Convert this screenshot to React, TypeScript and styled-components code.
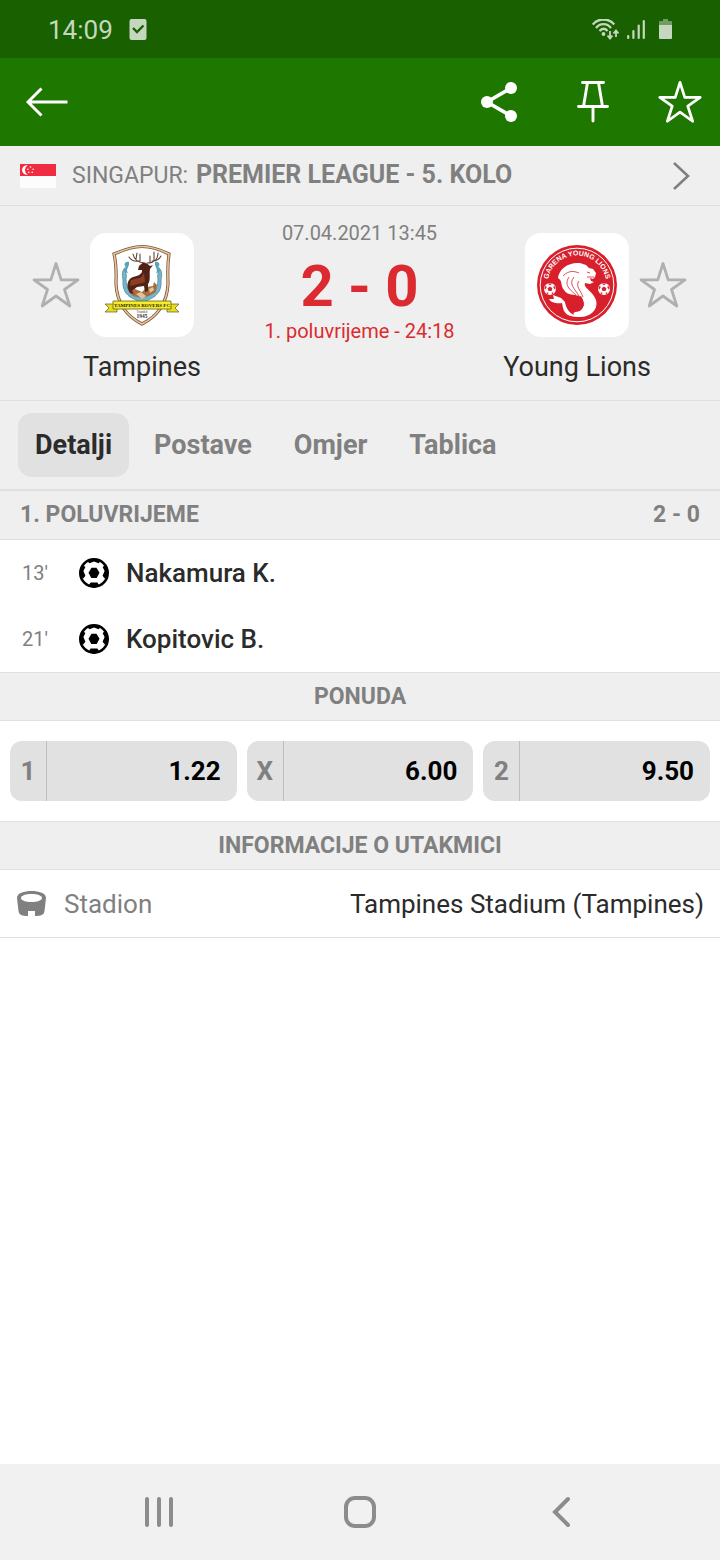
import React from "react";
import styled, { createGlobalStyle } from "styled-components";

const color = {
  status: "#186000",
  bar: "#1e7800",
  panel: "#efefef",
  chip: "#e1e1e1",
  line: "#e0e0e0",
  muted: "#808080",
  text: "#2b2b2b",
  live: "#dc2b30",
  statusIcon: "#c5d7bf",
};

const GlobalStyle = createGlobalStyle`
  *, *::before, *::after { box-sizing: border-box; }
  body { margin: 0; background: #fff; color: ${color.text}; font-family: Roboto, "Liberation Sans", sans-serif; }
  h1, h2, p, ul, dl, dd { margin: 0; padding: 0; }
  ul { list-style: none; }
  button { margin: 0; padding: 0; border: 0; background: none; color: inherit; font: inherit; cursor: pointer; }
  a { color: inherit; text-decoration: none; }
  svg { display: block; flex: none; }
`;

const Screen = styled.div`
  display: flex;
  flex-direction: column;
  min-height: 100vh;
`;

const StatusBar = styled.div`
  display: flex;
  align-items: center;
  height: 58px;
  padding: 2px 47px 0 48px;
  background: ${color.status};
  color: ${color.statusIcon};
  font-size: 26px;
`;

const StatusLeft = styled.div`
  display: flex;
  align-items: center;
  gap: 16px;
  margin-right: auto;
`;

const StatusRight = styled.div`
  display: flex;
  align-items: center;
  gap: 8px;
`;

const AppBar = styled.header`
  display: flex;
  align-items: center;
  height: 88px;
  padding: 0 16px 0 22px;
  background: ${color.bar};
  color: #fff;
`;

const AppActions = styled.div`
  display: flex;
  gap: 42px;
  margin-left: auto;
`;

const IconButton = styled.button`
  display: flex;
  align-items: center;
  justify-content: center;
  width: 48px;
  height: 48px;
`;

const LeagueLink = styled.a`
  display: flex;
  align-items: center;
  height: 60px;
  padding: 0 30px 0 20px;
  border-bottom: 1px solid ${color.line};
  background: ${color.panel};
  color: ${color.muted};
`;

const LeagueName = styled.span`
  flex: 1;
  margin-left: 16px;
  font-size: 23px;
  line-height: 32px;
  white-space: nowrap;

  b {
    margin-left: 2px;
    font-size: 25px;
    font-weight: 700;
  }
`;

const Match = styled.section`
  display: flex;
  justify-content: space-between;
  padding: 15px 33px 15px 32px;
  border-bottom: 1px solid ${color.line};
  background: ${color.panel};
`;

const Team = styled.div<{ $away?: boolean }>`
  display: grid;
  grid-template-columns: ${(p) => (p.$away ? "104px 48px" : "48px 104px")};
  grid-template-areas: ${(p) => (p.$away ? '"crest star" "name ."' : '"star crest" ". name"')};
  column-gap: 10px;
  row-gap: 12px;
  padding-top: 12px;
`;

const Favourite = styled(IconButton)`
  grid-area: star;
  align-self: center;
  color: #b0b0b0;
`;

const Crest = styled.div`
  grid-area: crest;
  display: flex;
  align-items: center;
  justify-content: center;
  height: 104px;
  border-radius: 16px;
  background: #fff;
`;

const TeamName = styled.span`
  grid-area: name;
  justify-self: center;
  font-size: 27px;
  line-height: 36px;
  white-space: nowrap;
`;

const Result = styled.div`
  display: flex;
  flex-direction: column;
  align-items: center;
  white-space: nowrap;
`;

const Kickoff = styled.time`
  margin-bottom: 11px;
  color: ${color.muted};
  font-size: 20px;
  line-height: 24px;
`;

const Score = styled.h1`
  color: ${color.live};
  font-size: 58px;
  font-weight: 700;
  line-height: 60px;
`;

const Period = styled.p`
  color: ${color.live};
  font-size: 20px;
  line-height: 30px;
`;

const Tabs = styled.nav`
  display: flex;
  gap: 8px;
  padding: 12px 18px;
  border-bottom: 2px solid ${color.line};
  background: ${color.panel};
`;

const Tab = styled.button<{ $active?: boolean }>`
  height: 64px;
  padding: 0 17px;
  border-radius: 14px;
  background: ${(p) => (p.$active ? color.chip : "transparent")};
  color: ${(p) => (p.$active ? color.text : color.muted)};
  font-size: 27px;
  font-weight: 700;
`;

const Content = styled.main`
  flex: 1;
`;

const SectionHeader = styled.h2<{ $center?: boolean; $ruled?: boolean }>`
  display: flex;
  justify-content: ${(p) => (p.$center ? "center" : "space-between")};
  padding: 0 20px;
  border-top: ${(p) => (p.$ruled ? `1px solid ${color.line}` : "0")};
  border-bottom: 1px solid ${color.line};
  background: ${color.panel};
  color: ${color.muted};
  font-size: 23px;
  font-weight: 700;
  line-height: ${(p) => (p.$ruled ? 47 : 48)}px;
`;

const Incident = styled.li`
  display: flex;
  align-items: center;
  height: 66px;
  padding: 0 22px;
  font-size: 26px;
  font-weight: 500;
`;

const Minute = styled.span`
  width: 56px;
  color: ${color.muted};
  font-size: 20px;
  font-weight: 400;
`;

const Player = styled.span`
  margin-left: 16px;
`;

const Odds = styled.div`
  display: flex;
  gap: 10px;
  padding: 20px 10px;
`;

const Odd = styled.button`
  display: flex;
  flex: 1;
  align-items: stretch;
  height: 60px;
  border-radius: 12px;
  background: ${color.chip};
  color: #000;
  font-size: 26px;
  font-weight: 700;
  line-height: 60px;
`;

const Outcome = styled.span`
  width: 37px;
  border-right: 1px solid #bdbdbd;
  color: ${color.muted};
`;

const Price = styled.span`
  flex: 1;
  padding-right: 16px;
  text-align: right;
`;

const Info = styled.dl`
  display: flex;
  align-items: center;
  justify-content: space-between;
  height: 68px;
  padding: 0 16px;
  border-bottom: 1px solid ${color.line};
  font-size: 26px;
`;

const InfoLabel = styled.dt`
  display: flex;
  align-items: center;
  gap: 17px;
  color: ${color.muted};
`;

const SystemNav = styled.nav`
  display: flex;
  align-items: center;
  justify-content: center;
  gap: 153px;
  height: 96px;
  background: #f1f1f1;
  color: #8c8c8c;
`;

const StarIcon = ({ size, stroke }: { size: number; stroke: number }) => (
  <svg width={size} height={size} viewBox="0 0 48 48" fill="none" stroke="currentColor" strokeWidth={stroke} strokeLinejoin="round">
    <path d="M24 2.500 29.200 18.900H46L32.500 28.500 37.800 45 24 35 10.200 45 15.500 28.500 2 18.900H18.800Z" />
  </svg>
);

const BallIcon = () => (
  <svg width="32" height="32" viewBox="0 0 32 32">
    <circle cx="16" cy="16" r="13.700" fill="#fff" stroke="#000" strokeWidth="2.600" />
    <path d="M13.500 10.800H18.500L21.500 15.800 18.700 21H13.300L10.500 15.800Z" />
    <path d="M9 4 16 2 23 4 20.500 6.200 16 4.600 11.500 6.200ZM1.600 14 4.600 8 7.400 10 5.400 14 7.400 18.800 5.200 21.500 2.600 20ZM30.400 14 27.400 8 24.600 10 26.600 14 24.600 18.800 26.800 21.500 29.400 20ZM12.600 25.600H19.400L21.600 29 16 31 10.400 29Z" />
  </svg>
);

const SingaporeFlag = () => (
  <svg width="36" height="24" viewBox="0 0 36 24">
    <path fill="#fcfcfc" d="M0 12H36V24H0Z" />
    <path fill="#f02c43" d="M0 0H36V12H0Z" />
    <path fill="#fff" d="M7.800 1.300A4.800 4.800 0 1 0 7.800 10.700 5.300 5.300 0 0 1 7.800 1.300Z" />
    <g fill="#fff">
      <circle cx="10.500" cy="3" r=".8" />
      <circle cx="7.800" cy="5.200" r=".8" />
      <circle cx="13.200" cy="5.200" r=".8" />
      <circle cx="8.800" cy="8.200" r=".8" />
      <circle cx="12.200" cy="8.200" r=".8" />
    </g>
  </svg>
);

const TampinesCrest = () => (
  <svg width="80" height="84" viewBox="0 0 80 84">
    <path d="M40 3.500C50 3.500 59 7 67 11C65 24 66 32 66 41 65 60 56 73 40 81 24 73 15 60 14 41 14 32 15 24 12 11 21 7 30 3.500 40 3.500Z" fill="#fff" stroke="#77583a" strokeWidth="3.200" />
    <path d="M40 3.500C50 3.500 59 7 67 11C65 24 66 32 66 41 65 60 56 73 40 81 24 73 15 60 14 41 14 32 15 24 12 11 21 7 30 3.500 40 3.500Z" fill="none" stroke="#eac49b" strokeWidth="1.600" />
    <path d="M22 26C24 30 25 32 24 36 24 46 29 53 40 54 51 53 56 46 56 36 55 32 56 30 58 26 61 30 59 35 59 38 60 49 53 54 48 56 44 58 42 60 40 62 38 60 36 58 32 56 27 54 20 49 21 38 21 35 19 30 22 26Z" fill="#76b5c9" stroke="#4b8da3" strokeWidth=".8" />
    <path d="M27 19C23 18 21 22 24 24 20 25 22 30 26 30 23 26 28 24 27 19ZM53 19C57 18 59 22 56 24 60 25 58 30 54 30 57 26 52 24 53 19Z" fill="#58a2bb" />
    <path d="M27 49 33 46 40 49 45 44 51 43 52 39 55 42 54 49 47 53 39 55 31 53Z" fill="#a66c42" />
    <path d="M34 51 39 49 44 53 40 56ZM47 46 51 44 52 47 48 50Z" fill="#dfc39a" />
    <path d="M37 23 41 19.500 45 20.500 48 23 51 22 48 26C47 31 49 37 46 41L46 48 43 49 42 43 35 44 30 48 32 51 28 50C24 44 25 38 29 35 33 33 38 33 40 29L40 27 36 27Z" fill="#522214" />
    <path d="M29 37 39 34.500 42 30 43 39 36 41 28 43Z" fill="#8b3e24" />
    <path d="M43 20C35 20 32 16 31 11M37 18C32 19 29 17 27 14M34 16 35 10M38 18 38 11M45 20C52 20 56 16 56 10M50 18C54 18 57 17 59 13M52 17 52 9M48 19 48 13" fill="none" stroke="#604336" strokeWidth="1.100" strokeLinecap="round" />
    <path d="M3 61H15V69H3L7 65ZM77 61H65V69H77L73 65Z" fill="#e8dc20" stroke="#5d5c20" strokeWidth=".7" />
    <path d="M11 58H69V66H11Z" fill="#f7ec28" stroke="#66631d" strokeWidth=".8" />
    <text x="40" y="64" textAnchor="middle" fontFamily="Liberation Serif, serif" fontSize="5" fontWeight="700" fill="#242414">TAMPINES ROVERS FC</text>
    <text x="40" y="69.500" textAnchor="middle" fontFamily="Liberation Serif, serif" fontSize="3" fill="#333">Founded</text>
    <text x="40" y="74.500" textAnchor="middle" fontFamily="Liberation Serif, serif" fontSize="5.500" fontWeight="700" fill="#333">1945</text>
  </svg>
);

const SmallBall = ({ x }: { x: number }) => (
  <g transform={`translate(${x} 44)`}>
    <circle r="6" fill="#fff" />
    <path fill="#d8202d" d="M0-2.500 2.400-.8 1.500 2H-1.500L-2.400-.8ZM-2.500-5.400 2.500-5.400 0-3.800ZM-5.600-1-4-3.800-3.400-1.500-5 .8ZM5.600-1 4-3.800 3.400-1.500 5 .8ZM-4 4-1.800 3.200-1.800 5.500ZM4 4 1.800 3.200 1.800 5.500Z" />
  </g>
);

const LionsCrest = () => (
  <svg width="80" height="80" viewBox="0 0 80 80">
    <circle cx="40" cy="40" r="40" fill="#d8202d" />
    <circle cx="40" cy="40" r="36.800" fill="none" stroke="#fff" strokeWidth="1" />
    <path id="lions-arc" d="M10.500 40A29.500 29.500 0 0 1 69.500 40" fill="none" />
    <text fontFamily="Liberation Sans, sans-serif" fontSize="7" fontWeight="700" fill="#fff" textAnchor="middle">
      <textPath href="#lions-arc" startOffset="50%">GARENA YOUNG LIONS</textPath>
    </text>
    <SmallBall x={13} />
    <SmallBall x={67} />
    <path d="M21 33C22 24 31 17 43 18L49 20 52 23 56 24 59 28 58 32 56 34 53 33 54 36 57 37 53 39 48 38C46 43 56 46 59 55 62 66 51 73 41 72 31 72 27 68 26 63L25 58C21 59 14 58 12 54L17 54 16 50 24 53 28 57C29 63 32 68 37 70 35 67 39 67 43 65 50 60 46 55 42 51 37 49 31 51 27 45 23 40 26 36 21 33Z" fill="#fff" />
    <path d="M44 51C47 56 48 60 45 64 41 69 36 66 31 63L28 57 32 52 38 53Z" fill="#d8202d" />
    <path d="M32 32C26 41 35 46 39 50M37 32C31 39 38 44 42 51M42 36C38 41 44 46 46 52M26 31C32 25 37 26 42 28M50 32 57 32M50 27 53 28" fill="none" stroke="#d8202d" strokeWidth=".8" />
  </svg>
);

const incidents = [
  { minute: "13'", player: "Nakamura K." },
  { minute: "21'", player: "Kopitovic B." },
];

const odds = [
  { outcome: "1", price: "1.22" },
  { outcome: "X", price: "6.00" },
  { outcome: "2", price: "9.50" },
];

const tabs = ["Detalji", "Postave", "Omjer", "Tablica"];

export default function App() {
  return (
    <Screen>
      <GlobalStyle />
      <StatusBar>
        <StatusLeft>
          <span>14:09</span>
          <svg width="18" height="22" viewBox="0 0 18 22">
            <rect x=".5" y="0" width="17" height="21" rx="2" fill="currentColor" />
            <path d="M4 9 8 13 14.500 6.500" fill="none" stroke={color.status} strokeWidth="2.400" />
          </svg>
        </StatusLeft>
        <StatusRight>
          <svg width="27" height="22" viewBox="0 0 27 22" fill="none" stroke="currentColor" strokeWidth="2.300">
            <path d="M.8 5.500C6-1.200 17-1.200 22.200 5.500M4 9C8 3.800 15 3.800 19 9M7.500 12C10 9 13.500 9 15.500 12" />
            <circle cx="11.500" cy="15" r="1.900" fill="currentColor" stroke="none" />
            <path d="M18 12V19.500M15.500 16.500 18 19.500 20.500 16.500M24 18V12M21.500 14.500 24 11.500 26.500 14.500" strokeWidth="1.800" />
          </svg>
          <svg width="18" height="22" viewBox="0 0 18 22" stroke="currentColor" strokeWidth="2.200" strokeLinecap="round">
            <path d="M1.200 17V19M6.400 12V19M11.700 6.500V19M16.800 2V19" />
          </svg>
          <svg width="20" height="22" viewBox="0 0 20 22" fill="currentColor">
            <path opacity=".5" d="M10 0H15V2H18Q19 2 19 3V6H6V3Q6 2 7 2H10Z" />
            <path d="M6 6H19V19Q19 20 18 20H7Q6 20 6 19Z" />
          </svg>
        </StatusRight>
      </StatusBar>

      <AppBar>
        <IconButton aria-label="Natrag">
          <svg width="44" height="32" viewBox="0 0 44 32" fill="none" stroke="#fff" strokeWidth="2.900">
            <path d="M43.500 16H5M17.500 2.500 4 16 17.500 29.500" />
          </svg>
        </IconButton>
        <AppActions>
          <IconButton aria-label="Podijeli">
            <svg width="40" height="42" viewBox="0 0 40 42" fill="#fff">
              <path d="M31 7 7 21 31 35" fill="none" stroke="#fff" strokeWidth="3.600" />
              <circle cx="7" cy="21" r="6" />
              <circle cx="31" cy="7" r="6" />
              <circle cx="31" cy="35" r="6" />
            </svg>
          </IconButton>
          <IconButton aria-label="Prikvači">
            <svg width="40" height="44" viewBox="-6 0 40 44" fill="none" stroke="#fff" strokeWidth="2.900" strokeLinecap="round">
              <path d="M6.500 2.500H27.500M2.500 26.500H31.500M11.500 2.500 7.500 26.500M22.500 2.500 26.500 26.500M17 26.500V41" />
            </svg>
          </IconButton>
          <IconButton aria-label="Dodaj u favorite">
            <StarIcon size={44} stroke={3} />
          </IconButton>
        </AppActions>
      </AppBar>

      <LeagueLink href="#liga">
        <SingaporeFlag />
        <LeagueName>
          SINGAPUR: <b>PREMIER LEAGUE - 5. KOLO</b>
        </LeagueName>
        <svg width="18" height="30" viewBox="0 0 18 30" fill="none" stroke="currentColor" strokeWidth="2.600">
          <path d="M2 2 16 15 2 28" />
        </svg>
      </LeagueLink>

      <Match>
        <Team>
          <Favourite aria-label="Prati Tampines">
            <StarIcon size={48} stroke={2.8} />
          </Favourite>
          <Crest><TampinesCrest /></Crest>
          <TeamName>Tampines</TeamName>
        </Team>
        <Result>
          <Kickoff dateTime="2021-04-07T13:45">07.04.2021 13:45</Kickoff>
          <Score>2 - 0</Score>
          <Period>1. poluvrijeme - 24:18</Period>
        </Result>
        <Team $away>
          <Crest><LionsCrest /></Crest>
          <Favourite aria-label="Prati Young Lions">
            <StarIcon size={48} stroke={2.8} />
          </Favourite>
          <TeamName>Young Lions</TeamName>
        </Team>
      </Match>

      <Tabs>
        {tabs.map((tab, i) => (
          <Tab key={tab} $active={i === 0} aria-current={i === 0 ? "page" : undefined}>{tab}</Tab>
        ))}
      </Tabs>

      <Content>
        <SectionHeader>
          <span>1. POLUVRIJEME</span>
          <span>2 - 0</span>
        </SectionHeader>
        <ul>
          {incidents.map((item) => (
            <Incident key={item.minute}>
              <Minute>{item.minute}</Minute>
              <BallIcon />
              <Player>{item.player}</Player>
            </Incident>
          ))}
        </ul>

        <SectionHeader $center $ruled>PONUDA</SectionHeader>
        <Odds>
          {odds.map((odd) => (
            <Odd key={odd.outcome}>
              <Outcome>{odd.outcome}</Outcome>
              <Price>{odd.price}</Price>
            </Odd>
          ))}
        </Odds>

        <SectionHeader $center $ruled>INFORMACIJE O UTAKMICI</SectionHeader>
        <Info>
          <InfoLabel>
            <svg width="31" height="28" viewBox="0 0 31 28">
              <path fill="currentColor" fillRule="evenodd" d="M1 8C1 3 8 1 15.500 1S30 3 30 8L28.500 21C28 25 25 26 19 26V21H12V26C6 26 3 25 2.500 21ZM5 8C5 10.500 10 12 15.500 12S26 10.500 26 8 21 4 15.500 4 5 5.500 5 8Z" />
            </svg>
            Stadion
          </InfoLabel>
          <dd>Tampines Stadium (Tampines)</dd>
        </Info>
      </Content>

      <SystemNav>
        <IconButton aria-label="Nedavne aplikacije">
          <svg width="30" height="32" viewBox="0 0 30 32" stroke="currentColor" strokeWidth="4" strokeLinecap="round">
            <path d="M3 3V29M15 3V29M27 3V29" />
          </svg>
        </IconButton>
        <IconButton aria-label="Početni zaslon">
          <svg width="32" height="32" viewBox="0 0 32 32" fill="none" stroke="currentColor" strokeWidth="4">
            <rect x="2" y="2" width="28" height="28" rx="9" />
          </svg>
        </IconButton>
        <IconButton aria-label="Nazad">
          <svg width="20" height="32" viewBox="0 0 20 32" fill="none" stroke="currentColor" strokeWidth="4" strokeLinecap="round">
            <path d="M17 3 4 16 17 29" />
          </svg>
        </IconButton>
      </SystemNav>
    </Screen>
  );
}
